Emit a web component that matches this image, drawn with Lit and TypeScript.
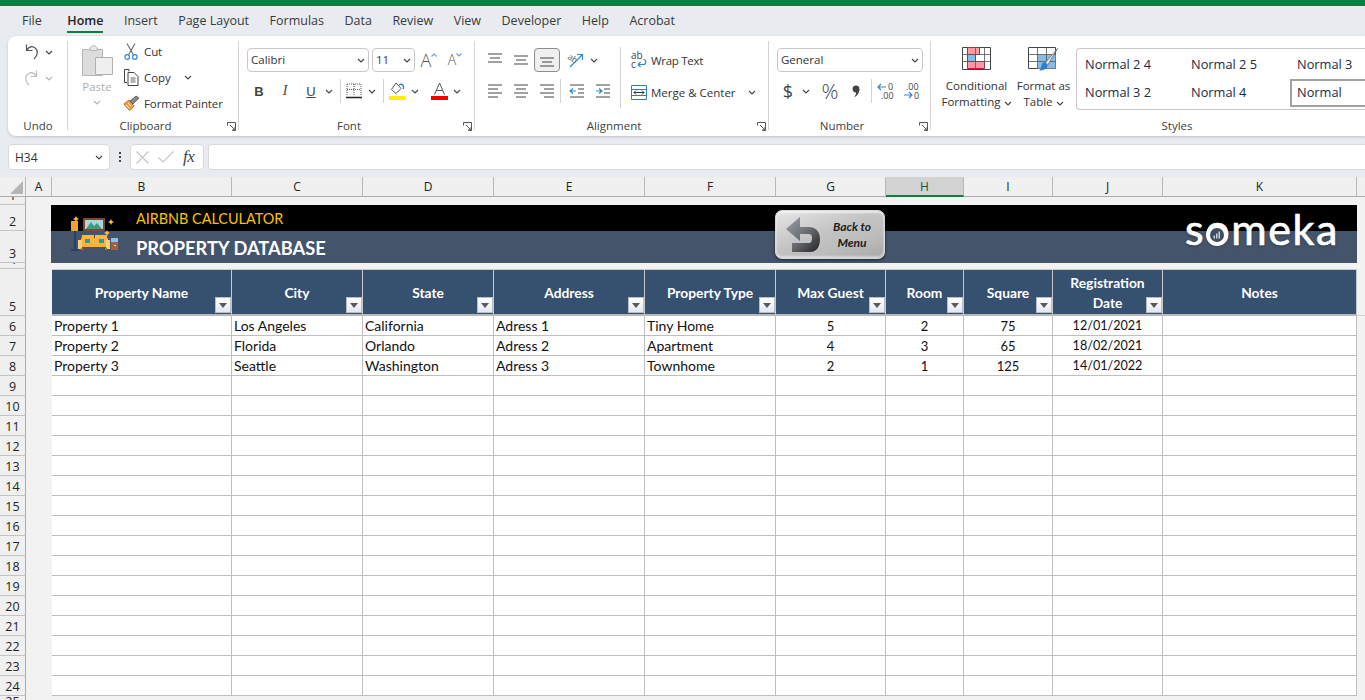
import { LitElement, html, css, svg } from "lit";
import { customElement } from "lit/decorators.js";

const chev = svg`<svg class="chevsvg" width="8" height="5" viewBox="0 0 8 5"><path d="M1 1l3 3 3-3" fill="none" stroke="#444" stroke-width="1.1"/></svg>`;
const chevG = svg`<svg class="chevsvg" width="8" height="5" viewBox="0 0 8 5"><path d="M1 1l3 3 3-3" fill="none" stroke="#b5b5b5" stroke-width="1.1"/></svg>`;
const launcher = svg`<svg width="9" height="9" viewBox="0 0 9 9"><path d="M.5 3.5V.5h8v8h-3M3 3l5 5M8 5v3H5" fill="none" stroke="#555" stroke-width="1"/></svg>`;
const lines = (ys: [number, number, number][]) => svg`<svg width="16" height="16" viewBox="0 0 16 16">${ys.map(([y, a, b]) => svg`<path d="M${a} ${y}H${b}" stroke="#444" stroke-width="1"/>`)}</svg>`;

const icons: Record<string, any> = {
  undo: svg`<svg width="17" height="18" viewBox="0 0 17 18"><path d="M3.5 1.5v6h6M3.5 7.5C6 3.5 9 3 11.5 4.5c4 2.500 3.500 8-.5 11.500" fill="none" stroke="#555" stroke-width="1.2"/></svg>`,
  redo: svg`<svg width="17" height="18" viewBox="0 0 17 18"><path d="M13.500 1.500v6h-6M13.500 7.500C11 3.500 8 3 5.500 4.500c-4 2.500-3.500 8 .5 11.500" fill="none" stroke="#bdbdbd" stroke-width="1.2"/></svg>`,
  paste: svg`<svg width="32" height="31" viewBox="0 0 32 31"><path d="M1.500 4.500h6l1-1h7l1 1h5v26h-20z" fill="#dcdcdc" stroke="#b5b5b5"/><path d="M9 3.500c0-1.500 2-3 3.500-3s3.500 1.500 3.500 3v2H9z" fill="#e8e8e8" stroke="#b5b5b5"/><path d="M14.500 12.500h17v17h-17z" fill="#efefef" stroke="#b0b0b0"/></svg>`,
  cut: svg`<svg width="14" height="17" viewBox="0 0 14 17"><path d="M3 .5l6.500 11.500M11 .5L4.500 12" stroke="#666" stroke-width="1.1" fill="none"/><circle cx="3.200" cy="14" r="2.300" fill="none" stroke="#2e8ad0" stroke-width="1.200"/><circle cx="10.800" cy="14" r="2.300" fill="none" stroke="#2e8ad0" stroke-width="1.200"/></svg>`,
  copy: svg`<svg width="17" height="17" viewBox="0 0 17 17"><path d="M6 2.500V.5H1.500v13H4" fill="none" stroke="#444"/><path d="M5 3.500h6l4 4v9H5z" fill="#fff" stroke="#444"/><path d="M7.500 9h5M7.500 11h5M7.500 13h5" stroke="#666"/></svg>`,
  painter: svg`<svg width="17" height="16" viewBox="0 0 17 16"><path d="M1 9l5-4 5 6-4 4.500C5 14 3 12 1 9z" fill="#f0a040" stroke="#d06e14"/><path d="M3 10l3 3M5 8l3 3" stroke="#fff"/><path d="M7 6l6-5 3 2-6 6z" fill="#888" stroke="#555" stroke-width=".8"/></svg>`,
  borders: svg`<svg width="16" height="16" viewBox="0 0 16 16"><path d="M1 1h14M1 1v11M15 1v11M8 1v11M1 6.500h14" stroke="#555" stroke-width="1" stroke-dasharray="1 1" fill="none"/><path d="M0 14.500h16" stroke="#222" stroke-width="1.500"/></svg>`,
  fill: svg`<svg width="17" height="18" viewBox="0 0 17 18"><path d="M7 1L2.500 7.500 7 11.500l5-5z" fill="#fff" stroke="#555"/><path d="M10 3c3-2 5 0 4.500 4" fill="none" stroke="#2e7fc8" stroke-width="1.400"/><path d="M0 14h17v4H0z" fill="#ffee00"/></svg>`,
  color: svg`<svg width="17" height="18" viewBox="0 0 17 18"><path d="M3.500 12.500L8.500 1l5 11.500M5.200 8.500h6.600" fill="none" stroke="#555" stroke-width="1"/><path d="M0 14h17v4H0z" fill="#f00000"/></svg>`,
  orient: svg`<svg width="18" height="17" viewBox="0 0 18 17"><text x="1" y="9" font-size="8.500" font-family="Open Sans" fill="#555" transform="rotate(35 5 6)">ab</text><path d="M3 15L15 3M10 2.500h5.500V8" fill="none" stroke="#2e8ad0" stroke-width="1.200"/></svg>`,
  outdent: svg`<svg width="16" height="14" viewBox="0 0 16 14"><path d="M1 1h14M9 5h6M9 9h6M1 13h14" stroke="#444"/><path d="M7 7H1M4 4.500L1 7l3 2.500" fill="none" stroke="#2e8ad0" stroke-width="1.200"/></svg>`,
  indent: svg`<svg width="16" height="14" viewBox="0 0 16 14"><path d="M1 1h14M9 5h6M9 9h6M1 13h14" stroke="#444"/><path d="M1 7h6M4 4.500L7 7 4 9.500" fill="none" stroke="#2e8ad0" stroke-width="1.200"/></svg>`,
  merge: svg`<svg width="16" height="15" viewBox="0 0 16 15"><path d="M.5.500h15v14H.5zM.5 4.500h15M.5 10.500h15" fill="none" stroke="#2a7fc4"/><path d="M3 7.500h10M5 5.500l-2 2 2 2M11 5.500l2 2-2 2" fill="none" stroke="#333"/></svg>`,
  wrap: svg`<svg width="16" height="20" viewBox="0 0 16 20"><text x="0" y="8.500" font-size="10" font-family="Open Sans" fill="#444">ab</text><text x="0" y="18" font-size="10" font-family="Open Sans" fill="#444">c</text><path d="M7 14.500h5.500c3 0 3-5 0-5M7 14.500l2.500-2.500M7 14.500l2.500 2.500" fill="none" stroke="#2e8ad0" stroke-width="1.200"/></svg>`,
  decInc: svg`<svg width="17" height="18" viewBox="0 0 17 18"><path d="M9 5H1M4 2L1 5l3 3" fill="none" stroke="#2e8ad0" stroke-width="1.200"/><text x="11" y="8" font-size="9" font-family="Open Sans" fill="#444">0</text><text x="4" y="17" font-size="9" font-family="Open Sans" fill="#444">.00</text></svg>`,
  decDec: svg`<svg width="17" height="18" viewBox="0 0 17 18"><text x="3" y="8" font-size="9" font-family="Open Sans" fill="#444">.00</text><path d="M1 13h8M6 10l3 3-3 3" fill="none" stroke="#2e8ad0" stroke-width="1.200"/><text x="11" y="17" font-size="9" font-family="Open Sans" fill="#444">0</text></svg>`,
  comma: svg`<svg width="8" height="13" viewBox="0 0 8 13"><circle cx="4" cy="4" r="3.400" fill="#444"/><path d="M7.400 4c0 4-2 7-5.500 8.500 2-2.500 2.500-4.500 2-6z" fill="#444"/></svg>`,
  cond: svg`<svg width="29" height="23" viewBox="0 0 29 23"><path d="M.5.500h28v22H.5z" fill="#fff" stroke="#444"/><path d="M5.500.500h12v7h-12zM5.500 14.500h17v7h-17z" fill="#ff9aa2" stroke="#c8202a"/><path d="M5.500 7.500h8v7h-8z" fill="#86bde8" stroke="#555"/><path d="M.5 7.500h28M.5 14.500h28M13.500.5v7M22.500.5v22M13.500 14.500v8" fill="none" stroke="#555" stroke-width=".8"/></svg>`,
  table: svg`<svg width="31" height="27" viewBox="0 0 31 27"><path d="M.5.500h27v21H.5z" fill="#fff" stroke="#444"/><path d="M9.500 7.500h18v14h-18z" fill="#86bde8"/><path d="M.5 7.500h27M.5 14.500h27M9.500.5v21M18.500.5v21" fill="none" stroke="#555" stroke-width=".8"/><path d="M29.500 1.500L17 16l2.500 2.500z" fill="#e8e8e8" stroke="#666" stroke-width=".8"/><path d="M16 15.500c3 0 4.500 2 3 4.500-2 3-5 3.500-8 3.500 2-1 2-3 2.500-5 .3-1.500 1-3 2.500-3z" fill="#2e7fc8"/></svg>`,
  close: svg`<svg width="13" height="13" viewBox="0 0 13 13"><path d="M.5.500l12 12M12.500.5l-12 12" stroke="#c4c4c4" stroke-width="1.100"/></svg>`,
  check: svg`<svg width="16" height="12" viewBox="0 0 16 12"><path d="M.5 6.500L5 11 15.500.5" fill="none" stroke="#c4c4c4" stroke-width="1.100"/></svg>`,
  caretUp: svg`<svg class="caret" width="6" height="4" viewBox="0 0 6 4"><path d="M.5 3.500L3 1l2.500 2.500" fill="none" stroke="#5aa7dd" stroke-width="1.100"/></svg>`,
  caretDn: svg`<svg class="caret" width="6" height="4" viewBox="0 0 6 4"><path d="M.5 .5L3 3l2.500-2.500" fill="none" stroke="#5aa7dd" stroke-width="1.100"/></svg>`,
};

const house = svg`<svg width="48" height="40" viewBox="0 0 48 40" shape-rendering="crispEdges">
  <rect x="13" y="3" width="22" height="13" fill="#7b4a32"/><rect x="15" y="5" width="18" height="9" fill="#a8d8d8"/>
  <path d="M16 14l5-7 3 4 3-3 5 6z" fill="#3f9a80" shape-rendering="auto"/>
  <rect x="1" y="6" width="7" height="10" fill="#f5a030"/><rect x="4" y="16" width="2" height="19" fill="#24406c"/><rect x="1" y="34" width="8" height="2" fill="#24406c"/>
  <rect x="11" y="23" width="27" height="9" fill="#f7b23c"/><rect x="12" y="20" width="12" height="9" fill="#f9b83f"/><rect x="25" y="20" width="12" height="9" fill="#f9b83f"/>
  <rect x="15" y="24" width="5" height="4" fill="#2f9e83"/><rect x="29" y="24" width="5" height="4" fill="#2f9e83"/>
  <rect x="8" y="25" width="4" height="9" fill="#f7cf7f"/><rect x="36" y="25" width="4" height="9" fill="#f7cf7f"/><rect x="11" y="33" width="2" height="2" fill="#b06a30"/><rect x="35" y="33" width="2" height="2" fill="#b06a30"/>
  <rect x="41" y="27" width="7" height="8" fill="#a8603a"/><rect x="41" y="23" width="7" height="4" fill="#8ac4ea"/><rect x="44" y="30" width="2" height="1" fill="#f5d090"/>
  <path d="M6 1l1 2 2 1-2 1-1 2-1-2-2-1 2-1zM41 4l1 2 2 1-2 1-1 2-1-2-2-1 2-1zM37 15l1 2 2 1-2 1-1 2-1-2-2-1 2-1z" fill="#f8c040" shape-rendering="auto"/>
</svg>`;

const COLS = ["B", "C", "D", "E", "F", "G", "H", "I", "J", "K"];
const HEAD = ["Property Name", "City", "State", "Address", "Property Type", "Max Guest", "Room", "Square", "Registration Date", "Notes"];
const DATA = [
  ["Property 1", "Los Angeles", "California", "Adress 1", "Tiny Home", "5", "2", "75", "12/01/2021", ""],
  ["Property 2", "Florida", "Orlando", "Adress 2", "Apartment", "4", "3", "65", "18/02/2021", ""],
  ["Property 3", "Seattle", "Washington", "Adress 3", "Townhome", "2", "1", "125", "14/01/2022", ""],
];
const TABS = ["File", "Home", "Insert", "Page Layout", "Formulas", "Data", "Review", "View", "Developer", "Help", "Acrobat"];
const BODY_ROWS = Array.from({ length: 19 }, (_, i) => i + 6);

@customElement("app-root")
export class AppRoot extends LitElement {
  static styles = css`
    :host { display: block; height: 700px; width: 1365px; overflow: hidden; background: #e8ecf0; font-family: "Open Sans", "Noto Sans", sans-serif; font-size: 11.500px; color: #333; }
    svg { overflow: visible; }
    .topbar { height: 6px; background: #107c41; }
    .tabs { height: 30px; display: flex; gap: 20.500px; padding-left: 22px; align-items: flex-start; font-size: 12.500px; color: #3a3a3a; }
    .tab { line-height: 30px; height: 27px; position: relative; white-space: nowrap; }
    .tab.on { color: #222; font-weight: 600; margin-left: 5px; }
    .tab.on::after { content: ""; position: absolute; left: 0; right: 0; top: 25px; height: 2px; background: #107c41; }
    .ribbon { height: 100px; margin-left: 8px; display: flex; background: #fff; border-radius: 8px 0 0 8px; box-shadow: 0 1px 3px rgba(0,0,0,.18); overflow: hidden; }
    .group { display: flex; flex-direction: column; position: relative; flex: none; }
    .group::after { content: ""; position: absolute; right: 0; top: 5px; bottom: 6px; width: 1px; background: #d4d4d4; }
    .g-undo { width: 60px; } .g-clip { width: 171px; } .g-font { width: 236px; } .g-align { width: 294px; } .g-num { width: 162px; } .g-styles { flex: 1; min-width: 0; }
    .g-styles::after { display: none; }
    .body { height: 80px; display: flex; }
    .label { height: 20px; line-height: 20px; text-align: center; white-space: nowrap; color: #404040; }
    .label.l { padding-right: 16px; }
    .label.st { padding-left: 58px; }
    .launch { position: absolute; right: 3px; bottom: 5px; height: 9px; width: 9px; display: flex; }
    .col { display: flex; flex-direction: column; }
    .row { display: flex; align-items: center; }
    .cell { display: flex; align-items: center; justify-content: center; flex: none; }
    .w26 { width: 26px; height: 24px; } .w12 { width: 10px; height: 24px; }
    .sep { width: 1px; height: 24px; background: #d4d4d4; flex: none; }
    .undo { padding: 3px 0 0 11px; }
    .undo .row { height: 26px; gap: 4px; }
    .undo .big { width: 20px; display: flex; justify-content: center; margin-left: 2px; }
    .clip { padding-left: 8px; }
    .paste { width: 42px; align-items: center; padding-top: 9px; color: #b0b0b0; }
    .paste-t { margin-top: 1px; line-height: 20px; } .paste .chevsvg { margin-top: 3px; }
    .clip-list { padding: 3px 0 0 3px; }
    .clip-list .row { height: 26px; }
    .clip-i { width: 20px; display: flex; justify-content: center; }
    .clip-t { margin-left: 3px; white-space: nowrap; color: #333; letter-spacing: -.1px; }
    .copy-c { margin-left: 13px; display: flex; }
    .fontb { padding: 12px 0 0 8px; gap: 7px; }
    .sel { height: 24px; box-sizing: border-box; border: 1px solid #c8c8c8; border-radius: 4px; display: flex; align-items: center; justify-content: space-between; padding: 0 3px; font-size: 11.500px; color: #333; flex: none; }
    .sel span { margin-bottom: 2px; }
    .s-name { width: 122px; } .s-size { width: 43px; margin-left: 3px; } .s-num { width: 146px; }
    .size-v { color: #4a2a7a; }
    .grow { margin-left: 1px; }
    .bigA { font-size: 18px; font-weight: 300; color: #555; line-height: 20px; }
    .smallA { font-size: 14px; font-weight: 300; color: #555; line-height: 20px; }
    .caret { align-self: flex-start; margin-top: 5px; flex: none; }
    .font-row2 { height: 24px; margin-left: -1px; }
    .bi { font-family: "Liberation Sans", sans-serif; font-size: 13px; color: #444; }
    .b { font-weight: 700; } .i { font-style: italic; font-family: "Liberation Serif", serif; font-size: 14px; } .u { text-decoration: underline; }
    .s10 { width: 6px; flex: none; } .s4 { width: 3px; flex: none; } .s2 { width: 2px; flex: none; }
    .alignb { padding: 12px 0 0 7px; }
    .al-left { width: 138px; gap: 7px; }
    .active { background: #f0f0f0; border: 1px solid #8c8c8c; border-radius: 4px; box-sizing: border-box; }
    .vsep { width: 1px; height: 61px; background: #d4d4d4; margin-top: -1px; flex: none; }
    .al-right { padding-left: 8px; gap: 8px; }
    .al-r { height: 24px; gap: 3px; white-space: nowrap; }
    .ar-i { width: 19px; display: flex; justify-content: center; }
    .wrap-t { letter-spacing: -.3px; }
    .merge-c { margin-left: 9px; display: flex; }
    .numb { padding: 12px 0 0 8px; gap: 7px; }
    .num-row { margin-left: -2px; }
    .dollar { font-size: 18px; color: #444; } .pct { font-size: 21px; font-weight: 300; color: #444; }
    .stylesb { padding-left: 11px; }
    .sbtn { align-items: center; padding-top: 11px; flex: none; text-align: center; line-height: 16px; }
    .s-cond { width: 69px; } .s-tab { width: 65px; }
    .sbtn-t { margin-top: 8px; white-space: nowrap; }
    .s-tab .sbtn-t { margin-top: 4px; }
    .gallery { flex: 1; margin-top: 12px; height: 62px; border: 1px solid #c8c8c8; border-right: 0; border-radius: 4px 0 0 4px; box-sizing: border-box; display: grid; grid-template-columns: repeat(3, 106px); grid-template-rows: 30px 28px; font-size: 12.800px; color: #1d2b45; padding-left: 1px; }
    .gal { display: flex; align-items: center; padding-left: 7px; white-space: nowrap; box-sizing: border-box; }
    .gal.r2 { padding-bottom: 2px; }
    .gal.sel2 { border: 2px solid #a0a0a0; border-right: 0; padding-left: 5px; }
    .fbar { height: 41px; padding-top: 8px; box-sizing: border-box; display: flex; gap: 0; align-items: flex-start; }
    .fbox { height: 26px; box-sizing: border-box; background: #fff; border: 1px solid #d9d9d9; border-radius: 4px; display: flex; align-items: center; flex: none; }
    .namebox { margin-left: 8px; width: 102px; justify-content: space-between; padding: 0 6px; font-size: 12px; color: #333; }
    .dots { width: 20px; display: flex; flex-direction: column; align-items: center; justify-content: center; height: 26px; gap: 2px; flex: none; }
    .dots i { width: 2px; height: 2px; background: #444; display: block; }
    .fxbox { width: 74px; padding-left: 5px; gap: 9px; }
    .fx { font-family: "Liberation Serif", serif; font-style: italic; font-size: 17px; color: #444; letter-spacing: -.5px; }
    .input { flex: 1; margin-left: 4px; border-right: 0; border-radius: 4px 0 0 4px; }
    .sheet { display: grid; grid-template-columns: 26px 26px 180px 131px 131px 151px 131px 110px 78px 89px 110px 194px 9px; grid-template-rows: 20px 8px 26px 32px 6px 47px repeat(20, 20px); background: #f2f2f2; overflow: hidden; position: relative; height: 523px; }
    .ch { background: #f0f0f0; border-right: 1px solid #b8b8b8; border-bottom: 1px solid #ababab; display: flex; align-items: center; justify-content: center; color: #222; font-size: 12px; box-sizing: border-box; }
    .ch.cur { background: #d2d2d2; border-bottom: 2px solid #107c41; color: #0d5c32; }
    .corner { position: relative; }
    .corner svg { position: absolute; right: 2px; bottom: 2px; }
    .rh { background: #f0f0f0; border-right: 1px solid #ababab; border-bottom: 1px solid #c4c4c4; grid-column: 1; display: flex; align-items: flex-end; justify-content: center; overflow: hidden; font-size: 12.500px; color: #222; box-sizing: border-box; line-height: 17px; }
    .rh.low { line-height: 16px; }
    .rh.last { align-items: flex-start; line-height: 11px; }
    .blank { grid-column: 2 / -1; }
    .a5 { grid-column: 2; } .a0 { grid-column: 2; }
    .banner { grid-column: 3 / 13; grid-row: 3 / 5; margin-left: -1px; background: linear-gradient(#000 0 26px, #44546a 26px); position: relative; font-family: Lato, sans-serif; display: grid; grid-template-rows: 26px 32px; padding-left: 85px; }
    .house { position: absolute; left: 19px; top: 10px; display: flex; }
    .t1 { color: #ffc000; font-size: 14.400px; line-height: 27px; }
    .t2 { color: #fff; font-size: 18.300px; font-weight: 700; line-height: 34px; }
    .back { position: absolute; left: 724px; top: 5px; width: 110px; height: 49px; box-sizing: border-box; border-radius: 7px; background: linear-gradient(160deg, #e6e6e6 0%, #c4c4c4 45%, #bcbcbc 70%, #a8a8a8 100%); border: 1px solid #d8d8d8; box-shadow: 0 1px 3px rgba(0,0,0,.55), inset 0 2px 2px rgba(255,255,255,.6), inset 0 -2px 2px rgba(255,255,255,.45); display: flex; align-items: center; }
    .back-i { margin-left: 9px; display: flex; }
    .back-t { font: italic 700 12px/16px Lato, sans-serif; color: #1c1c1c; text-align: center; width: 58px; margin-left: 2px; }
    .logo { position: absolute; left: 1134px; top: -1px; color: #fff; font: 400 43px/50px Lato, sans-serif; -webkit-text-stroke: .7px #fff; letter-spacing: 1.600px; text-shadow: 0 1px 3px rgba(0,0,0,.35); }
    .logo-o { position: absolute; left: 1155px; top: 19px; display: flex; }
    .hd { background: #365070; color: #fff; font: 700 13.800px/20px Lato, sans-serif; border-right: 1px solid #c9c9c9; border-bottom: 2px solid #b8b8b8; border-top: 1px solid #c9c9c9; box-sizing: border-box; display: flex; align-items: center; justify-content: center; text-align: center; position: relative; padding: 2px 2px 0; white-space: nowrap; }
    .hd.wrap { padding: 2px 24px 0; white-space: normal; }
    .filter { position: absolute; right: 0; bottom: 1px; width: 16px; height: 16px; box-sizing: border-box; background: linear-gradient(#ffffff, #e4e8ef); border: 1px solid #b8bdc6; display: flex; align-items: center; justify-content: center; }
    .filter i { border: 4px solid transparent; border-top: 5px solid #5a5a5a; border-bottom: 0; display: block; margin-top: 1px; }
    .td { background: #fff; border-right: 1px solid #bfbfbf; border-bottom: 1px solid #bfbfbf; box-sizing: border-box; font: 400 14px/20px Lato, sans-serif; color: #111; padding: 0 2px; white-space: nowrap; overflow: hidden; }
    .td.c { text-align: center; }
    .td.num { font-size: 13px; }
    .td.date { font-size: 12.600px; }
    .rest { border-bottom: 1px solid #d0d0d0; box-sizing: border-box; }
  `;

  private chCell() { return html`<span class="cell w12">${chev}</span>`; }

  private alignIcon(kind: string) {
    const m: Record<string, [number, number, number][]> = {
      top: [[2, 1, 15], [6, 3, 13], [10, 1, 15]],
      mid: [[4, 1, 15], [8, 3, 13], [12, 1, 15]],
      bot: [[6, 1, 15], [10, 3, 13], [14, 1, 15]],
      l: [[2, 1, 15], [6, 1, 11], [10, 1, 15], [14, 1, 11]],
      c: [[2, 1, 15], [6, 3, 13], [10, 1, 15], [14, 3, 13]],
      r: [[2, 1, 15], [6, 5, 15], [10, 1, 15], [14, 5, 15]],
    };
    return lines(m[kind]);
  }

  private ribbon() {
    return html`<div class="ribbon">
      <div class="group g-undo">
        <div class="body undo"><div class="col">
          <div class="row"><span class="big">${icons.undo}</span>${chev}</div>
          <div class="row"><span class="big">${icons.redo}</span>${chevG}</div>
        </div></div>
        <div class="label">Undo</div>
      </div>
      <div class="group g-clip">
        <div class="body clip">
          <div class="col paste">${icons.paste}<span class="paste-t">Paste</span>${chevG}</div>
          <div class="col clip-list">
            <div class="row"><span class="clip-i">${icons.cut}</span><span class="clip-t">Cut</span></div>
            <div class="row"><span class="clip-i">${icons.copy}</span><span class="clip-t">Copy</span><span class="copy-c">${chev}</span></div>
            <div class="row"><span class="clip-i">${icons.painter}</span><span class="clip-t">Format Painter</span></div>
          </div>
        </div>
        <div class="label l">Clipboard</div><span class="launch">${launcher}</span>
      </div>
      <div class="group g-font">
        <div class="body col fontb">
          <div class="row">
            <div class="sel s-name"><span>Calibri</span>${chev}</div>
            <div class="sel s-size"><span class="size-v">11</span>${chev}</div>
            <span class="cell w26 grow"><span class="bigA">A</span>${icons.caretUp}</span>
            <span class="cell w26"><span class="smallA">A</span>${icons.caretDn}</span>
          </div>
          <div class="row font-row2">
            <span class="cell w26 bi b">B</span><span class="cell w26 bi i">I</span><span class="cell w26 bi u">U</span>
            ${this.chCell()}<span class="s10"></span><span class="sep"></span>
            <span class="cell w26">${icons.borders}</span>${this.chCell()}<span class="s10"></span><span class="sep"></span>
            <span class="cell w26">${icons.fill}</span>${this.chCell()}<span class="s10"></span>
            <span class="cell w26">${icons.color}</span>${this.chCell()}
          </div>
        </div>
        <div class="label l">Font</div><span class="launch">${launcher}</span>
      </div>
      <div class="group g-align">
        <div class="body alignb">
          <div class="col al-left">
            <div class="row">
              <span class="cell w26">${this.alignIcon("top")}</span><span class="cell w26">${this.alignIcon("mid")}</span><span class="cell w26 active">${this.alignIcon("bot")}</span>
              <span class="s4"></span><span class="cell w26">${icons.orient}</span>${this.chCell()}
            </div>
            <div class="row">
              <span class="cell w26">${this.alignIcon("l")}</span><span class="cell w26">${this.alignIcon("c")}</span><span class="cell w26">${this.alignIcon("r")}</span>
              <span class="sep"></span><span class="s4"></span><span class="cell w26">${icons.outdent}</span><span class="cell w26">${icons.indent}</span>
            </div>
          </div>
          <div class="vsep"></div>
          <div class="col al-right">
            <div class="row al-r"><span class="ar-i">${icons.wrap}</span><span class="wrap-t">Wrap Text</span></div>
            <div class="row al-r"><span class="ar-i">${icons.merge}</span><span>Merge &amp; Center</span><span class="merge-c">${chev}</span></div>
          </div>
        </div>
        <div class="label l">Alignment</div><span class="launch">${launcher}</span>
      </div>
      <div class="group g-num">
        <div class="body col numb">
          <div class="sel s-num"><span>General</span>${chev}</div>
          <div class="row num-row">
            <span class="cell w26 dollar">$</span><span class="cell w12">${chev}</span><span class="s10"></span><span class="cell w26 pct">%</span><span class="cell w26">${icons.comma}</span>
            <span class="s2"></span><span class="sep"></span><span class="cell w26">${icons.decInc}</span><span class="cell w26">${icons.decDec}</span>
          </div>
        </div>
        <div class="label l">Number</div><span class="launch">${launcher}</span>
      </div>
      <div class="group g-styles">
        <div class="body stylesb">
          <div class="col sbtn s-cond">${icons.cond}<div class="sbtn-t">Conditional<br />Formatting ${chev}</div></div>
          <div class="col sbtn s-tab">${icons.table}<div class="sbtn-t">Format as<br />Table ${chev}</div></div>
          <div class="gallery">
            <span class="gal">Normal 2 4</span><span class="gal">Normal 2 5</span><span class="gal">Normal 3</span>
            <span class="gal r2">Normal 3 2</span><span class="gal r2">Normal 4</span><span class="gal r2 sel2">Normal</span>
          </div>
        </div>
        <div class="label st">Styles</div>
      </div>
    </div>`;
  }

  private sheet() {
    return html`<div class="sheet">
      <div class="ch corner"><svg width="13" height="13" viewBox="0 0 13 13"><path d="M13 0v13H0z" fill="#b4b4b4"/></svg></div>
      <div class="ch">A</div>
      ${COLS.map((c) => html`<div class="ch ${c === "H" ? "cur" : ""}">${c}</div>`)}
      <div class="ch"></div>

      <div class="rh">1</div><div class="blank"></div>
      <div class="rh">2</div><div class="rh low">3</div>
      <div class="banner">
        <span class="house">${house}</span>
        <div class="t1">AIRBNB CALCULATOR</div>
        <div class="t2">PROPERTY DATABASE</div>
        <div class="back">
          <span class="back-i"><svg width="36" height="38" viewBox="0 0 36 38"><defs><linearGradient id="ag" x1="0" x2="1" y1="0" y2="1"><stop offset="0" stop-color="#9aa0a8"/><stop offset=".5" stop-color="#6c7076"/><stop offset="1" stop-color="#222"/></linearGradient></defs><path d="M15 1L1 13l14 12v-7h9c2 0 3 1 3 4s-1 5-3 5H7v9h18c7 0 10-6 10-13 0-8-5-12-11-12h-9z" fill="url(#ag)"/></svg></span>
          <span class="back-t">Back to<br />Menu</span>
        </div>
        <div class="logo">someka</div>
        <span class="logo-o"><svg width="22" height="22" viewBox="0 0 22 22"><circle cx="11" cy="11" r="11" fill="#fff"/><circle cx="11" cy="11" r="7" fill="#3f4d61"/><path d="M7.500 11.500h1.500v3H7.500zM10 9.500h1.500v5H10zM12.500 7.500H14v7h-1.500z" fill="#c8d0da"/></svg></span>
      </div>
      <div class="rh">4</div><div class="blank"></div>
      <div class="rh">5</div><div class="a5"></div>
      ${HEAD.map((h, i) => html`<div class="hd ${i === 8 ? "wrap" : ""}">${h}${i < 9 ? html`<span class="filter"><i></i></span>` : ""}</div>`)}
      <div class="rest"></div>
      ${BODY_ROWS.map((r) => {
        const row = DATA[r - 6];
        return html`<div class="rh">${r}</div><div class="a0"></div>
        ${COLS.map((_, i) => html`<div class="td ${i >= 5 ? "c" : ""} ${i >= 5 && i < 8 ? "num" : ""} ${i === 8 ? "date" : ""}">${row ? row[i] : ""}</div>`)}<div></div>`;
      })}
      <div class="rh last">25</div>
    </div>`;
  }

  render() {
    return html`<div class="topbar"></div>
      <div class="tabs">${TABS.map((t) => html`<div class="tab ${t === "Home" ? "on" : ""}">${t}</div>`)}</div>
      ${this.ribbon()}
      <div class="fbar">
        <div class="fbox namebox"><span>H34</span>${chev}</div>
        <div class="dots"><i></i><i></i><i></i></div>
        <div class="fbox fxbox">${icons.close}${icons.check}<span class="fx">fx</span></div>
        <div class="fbox input"></div>
      </div>
      ${this.sheet()}`;
  }
}
